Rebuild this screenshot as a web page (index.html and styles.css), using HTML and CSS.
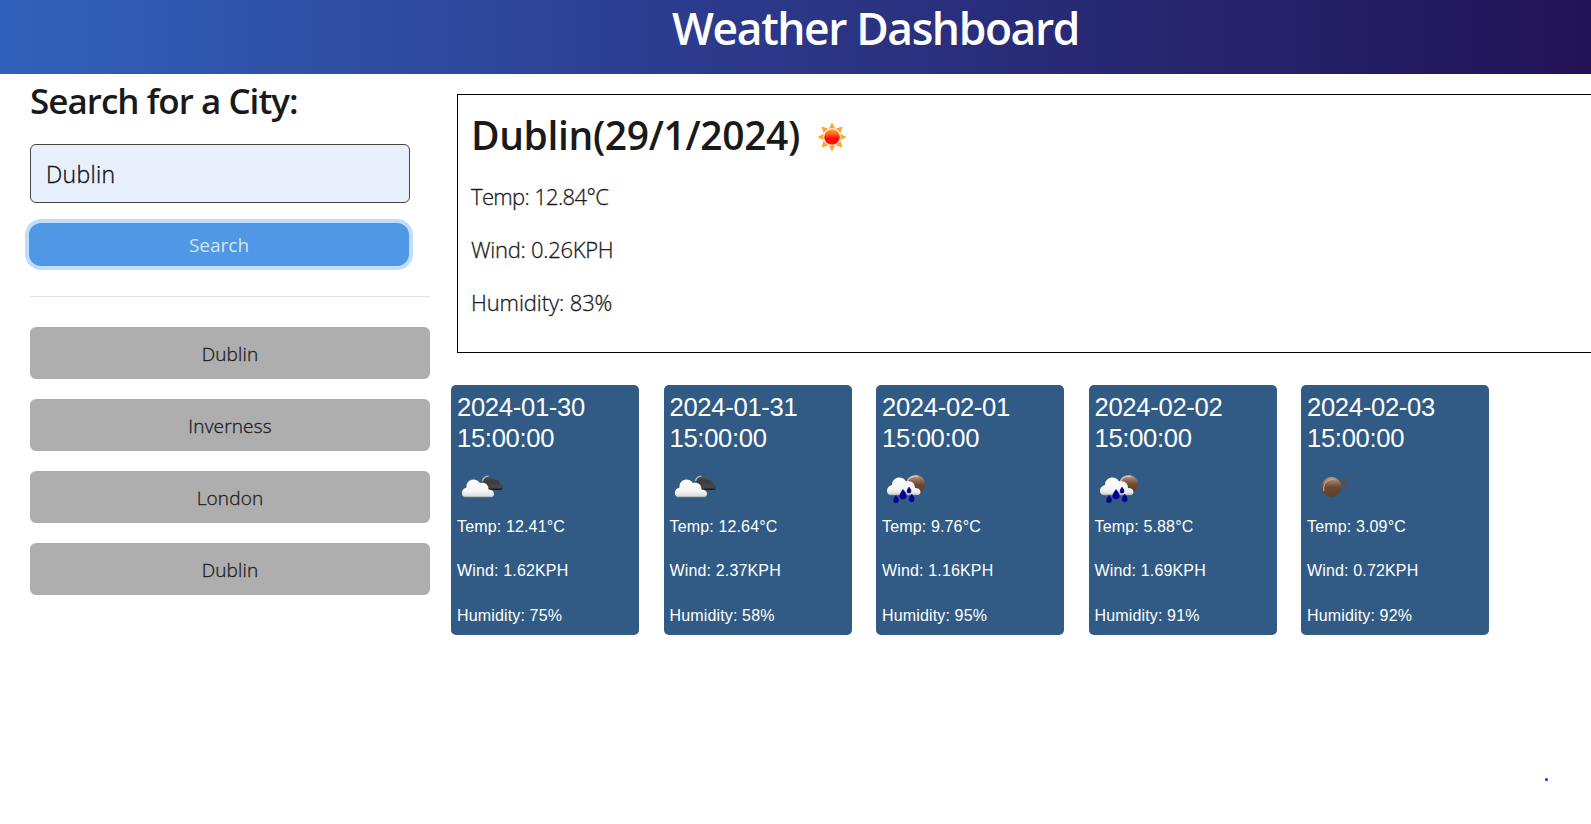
FILE: index.html
```
<!DOCTYPE html>
<html lang="en">
<head>
<meta charset="utf-8">
<title>Weather Dashboard</title>
<link rel="stylesheet" href="styles.css">
</head>
<body>
<svg class="defs" width="0" height="0" aria-hidden="true">
  <defs>
    <linearGradient id="sunFill" x1="0" y1="0" x2="0" y2="1"><stop offset="0" stop-color="#ffa640"/><stop offset=".35" stop-color="#ff5a18"/><stop offset=".6" stop-color="#ff0800"/><stop offset="1" stop-color="#ff1a00"/></linearGradient>
    <linearGradient id="cloudFill" x1="0" y1="0" x2="0" y2="1"><stop offset="0" stop-color="#fff"/><stop offset=".65" stop-color="#f6f6f6"/><stop offset=".92" stop-color="#dcdcdc"/><stop offset="1" stop-color="#777"/></linearGradient>
    <linearGradient id="darkFill" x1="0" y1="0" x2="0" y2="1"><stop offset="0" stop-color="#555"/><stop offset=".3" stop-color="#3c3c3c"/><stop offset=".8" stop-color="#484848"/><stop offset="1" stop-color="#111"/></linearGradient>
    <linearGradient id="moonFill" x1="0" y1="0" x2="0" y2="1"><stop offset="0" stop-color="#c3a08b"/><stop offset=".3" stop-color="#8f6850"/><stop offset=".5" stop-color="#6a4a35"/><stop offset="1" stop-color="#5e3f2b"/></linearGradient>
    <symbol id="cloudy" viewBox="0 0 50 50">
      <path d="M26 22c-1-7 7-10 12-4 4-.5 4.500 1.500 5 4 4 .5 4 6 0 6H32z" fill="url(#darkFill)"/>
      <path d="M25.500 19q1-4.500 6-4.800" fill="none" stroke="#bbb" stroke-width="1.300"/>
      <path d="M8.500 35.500C3 34 4 26.500 9.500 25.500c-.5-8.500 9-10.500 13.500-4.500 5-1 8.500 1.500 8.500 6.500 6.500 0 7 6.500 3 8z" fill="url(#cloudFill)"/>
    </symbol>
    <symbol id="rain" viewBox="0 0 50 50">
      <circle cx="33.700" cy="22.500" r="9.600" fill="url(#moonFill)"/>
      <path d="M25 20q3-7 11-5.500" fill="none" stroke="#dbc2b4" stroke-width="1.300"/>
      <path d="M9 33.500c-6-1-5-9.500 1-10.500 0-8.500 11-10 14-3.500 6-1.500 9 2 9 6.500 7 0 7 7 2 7.500z" fill="url(#cloudFill)"/>
      <g fill="#0000a8" stroke="#000060" stroke-width=".5">
        <path d="M14 33.500q3 3.500 2.500 5a2.500 2.300 0 0 1-5 0Q11.500 37 14 33.500zM21 27.500q4 4.500 3.300 6.500a3.300 3 0 0 1-6.600 0Q17.500 32 21 27.500zM27 25q2.500 3 2 4.300a2 1.900 0 0 1-4 0Q24.900 28 27 25zM29.700 32q3 3.500 2.500 5.500a2.500 2.300 0 0 1-5 0Q27 35.500 29.700 32z"/>
      </g>
    </symbol>
    <symbol id="night" viewBox="0 0 50 50">
      <circle cx="24.500" cy="25" r="10" fill="url(#moonFill)"/>
      <path d="M16.800 29q-1.500-11 10.500-12" fill="none" stroke="#c9a692" stroke-width="1.100"/>
      <path d="M37 15.500l.8 1.700 1.900.2-1.400 1.300.4 2-1.700-.9-1.700.9.400-2-1.400-1.300 1.900-.2zM38.700 22.300l.6 1.400 1.500.1-1.100 1 .3 1.600-1.300-.8-1.300.8.300-1.600-1.100-1 1.500-.1z" fill="#674c42" stroke="#674c42" stroke-width=".6"/>
    </symbol>
  </defs>
</svg>

<header class="hero"><h1 class="hero-title">Weather Dashboard</h1></header>
<div class="layout">
  <aside class="sidebar">
    <h3 class="search-title">Search for a City:</h3>
    <input class="search-input" type="text" value="Dublin">
    <button class="search-button">Search</button>
    <hr class="rule">
    <div class="history">
      <button class="city">Dublin</button>
      <button class="city">Inverness</button>
      <button class="city">London</button>
      <button class="city">Dublin</button>
    </div>
  </aside>
  <main class="content">
    <section class="today">
      <h2 class="today-title"><span>Dublin(29/1/2024)</span>
        <svg class="sun" viewBox="0 0 30 30">
          <path fill="#ffa62d" d="M15 .5l3.200 6h-6.400zM15 29.500l-3.200-6h6.400zM.5 15l6-3.200v6.400zM29.500 15l-6 3.200v-6.400zM4.500 4.500l6.700 2-4.700 4.700zM25.500 4.500l-2 6.700-4.700-4.700zM4.500 25.500l2-6.700 4.700 4.700zM25.500 25.500l-6.700-2 4.700-4.700z"/>
          <circle cx="15" cy="15" r="7.800" fill="url(#sunFill)"/>
        </svg>
      </h2>
      <p class="reading reading-temp">Temp: 12.84°C</p>
      <p class="reading reading-wind">Wind: 0.26KPH</p>
      <p class="reading">Humidity: 83%</p>
    </section>
    <section class="forecast">
      <article class="card"><h5 class="date">2024-01-30 15:00:00</h5><svg class="icon"><use href="#cloudy"/></svg><p class="stat">Temp: 12.41°C</p><p class="stat">Wind: 1.62KPH</p><p class="stat">Humidity: 75%</p></article>
      <article class="card"><h5 class="date">2024-01-31 15:00:00</h5><svg class="icon"><use href="#cloudy"/></svg><p class="stat">Temp: 12.64°C</p><p class="stat">Wind: 2.37KPH</p><p class="stat">Humidity: 58%</p></article>
      <article class="card"><h5 class="date">2024-02-01 15:00:00</h5><svg class="icon"><use href="#rain"/></svg><p class="stat">Temp: 9.76°C</p><p class="stat">Wind: 1.16KPH</p><p class="stat">Humidity: 95%</p></article>
      <article class="card"><h5 class="date">2024-02-02 15:00:00</h5><svg class="icon"><use href="#rain"/></svg><p class="stat">Temp: 5.88°C</p><p class="stat">Wind: 1.69KPH</p><p class="stat">Humidity: 91%</p></article>
      <article class="card"><h5 class="date">2024-02-03 15:00:00</h5><svg class="icon"><use href="#night"/></svg><p class="stat">Temp: 3.09°C</p><p class="stat">Wind: 0.72KPH</p><p class="stat">Humidity: 92%</p></article>
    </section>
  </main>
</div>
<span class="dot"></span>
</body>
</html>
```

FILE: styles.css
```
* { box-sizing: border-box; }
body {
  margin: 0;
  height: 824px;
  overflow: hidden;
  background: #fff;
  color: #1a1a1a;
  font-family: "Segoe UI", "Open Sans", sans-serif;
}
h1, h2, h3, h5, p { margin: 0; }
.defs { position: absolute; }
.hero {
  height: 74px;
  padding-left: 160px;
  background: linear-gradient(to right, #3161ba, #2c3a8c 45%, #282a75 67%, #241c62 87%, #221356);
  color: #fff;
  text-align: center;
}
.hero-title { font-size: 44.400px; font-weight: 600; line-height: 56px; letter-spacing: -1.400px; }
.layout { display: flex; width: 1611px; }
.sidebar { width: 451px; padding: 4px 21px 0 30px; }
.search-title { font-size: 35px; font-weight: 600; line-height: 46px; letter-spacing: -0.980px; }
.search-input {
  display: block;
  width: 380px;
  height: 59px;
  margin: 20px 0 20px;
  padding: 0 15px;
  border: 1px solid #444;
  border-radius: 6px;
  background: #e8f0fe;
  color: #111;
  font: 300 23px "Segoe UI", "Open Sans", sans-serif;
  letter-spacing: 0.300px;
  -webkit-text-stroke: 0.350px;
}
.search-button {
  display: block;
  width: 380px;
  height: 43px;
  margin-left: -1px;
  padding: 1px 0 0;
  border: 0;
  border-radius: 12px;
  background: #5097e5;
  box-shadow: 0 0 0 4px #bfdeff;
  color: #d3e6ea;
  font: 400 19px "Segoe UI", "Open Sans", sans-serif;
}
.rule { height: 1px; margin: 30px 0; border: 0; background: #e3e3e3; }
.history { display: flex; flex-direction: column; gap: 20px; }
.city {
  height: 52px;
  padding: 1px 0 0;
  border: 0;
  border-radius: 6px;
  background: #aeaeae;
  color: #1a1a1a;
  font: 300 19px "Segoe UI", "Open Sans", sans-serif;
  letter-spacing: 0.150px;
  -webkit-text-stroke: 0.300px;
}
.content { flex: 1; padding-top: 20px; }
.today {
  height: 259px;
  margin-left: 6px;
  padding: 12px 13px;
  border: 1px solid #000;
}
.today-title { display: flex; align-items: center; height: 54px; gap: 17px; font-size: 39px; font-weight: 600; letter-spacing: -0.380px; }
.sun { width: 30px; height: 30px; margin-top: 6px; }
.reading { margin-top: 23px; font-size: 22px; font-weight: 300; line-height: 30px; letter-spacing: -0.100px; -webkit-text-stroke: 0.300px; }
.reading-temp { margin-top: 20px; letter-spacing: -0.650px; }
.reading-wind { letter-spacing: -0.280px; }
.forecast { display: flex; gap: 24.500px; margin-top: 32px; }
.card {
  width: 188px;
  height: 250px;
  padding: 7px 6px;
  border-radius: 5px;
  background: #315b85;
  color: #fff;
  font-family: Arial, "Liberation Sans", sans-serif;
}
.date { width: 140px; font-size: 25.600px; font-weight: 400; line-height: 31px; letter-spacing: -0.300px; }
.icon { display: block; width: 50px; height: 50px; margin: 8px 0 3px; }
.stat { font-size: 16px; line-height: 24px; letter-spacing: 0.150px; }
.stat + .stat { margin-top: 20.300px; }
.dot { position: absolute; left: 1545px; top: 778px; width: 3px; height: 3px; border-radius: 50%; background: #22f; }
```
